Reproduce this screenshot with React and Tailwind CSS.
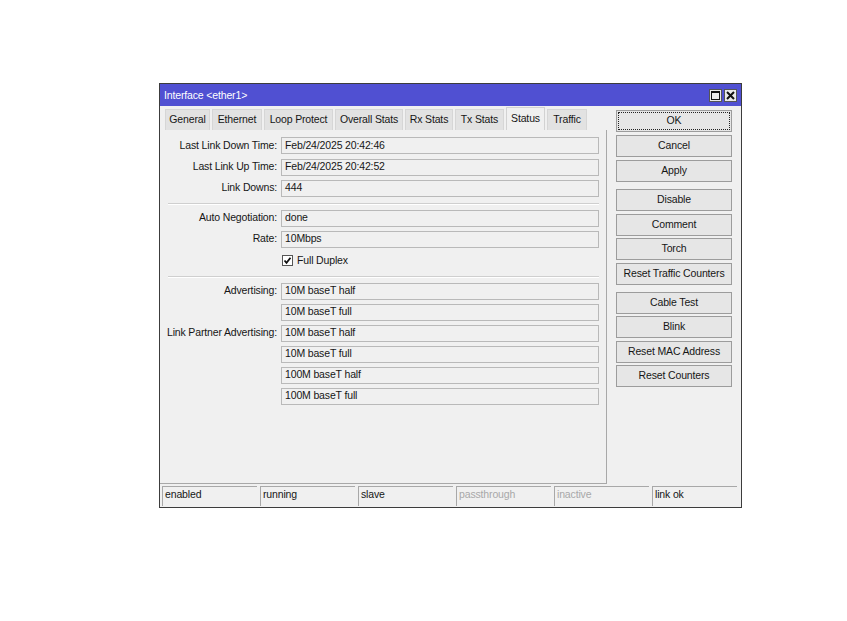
import React from "react";

const font = { fontFamily: '"Liberation Sans", Arial, sans-serif' };

function Field({ label, value }) {
  return (
    <div className="flex items-center h-[21px]">
      <div className="w-[119px] text-right pr-[2px] whitespace-nowrap">{label}</div>
      <div className="ml-[2px] w-[318px] h-[17px] border border-[#b9b9b9] bg-[#f0f0f0] flex items-center pl-[3px] whitespace-nowrap">
        {value}
      </div>
    </div>
  );
}

function Sep({ cls }) {
  return (
    <div className={`ml-[8px] w-[431px] h-[2px] border-t border-[#cfcfcf] border-b border-b-white ${cls || "my-[3px]"}`} />
  );
}

function Btn({ children, ok }) {
  return (
    <div className="w-[116px] h-[22px] border border-[#9c9c9c] bg-[#e6e6e6] flex items-center justify-center whitespace-nowrap">
      {ok ? (
        <div className="w-[112px] h-[18px] border border-dotted border-[#222] flex items-center justify-center">{children}</div>
      ) : (
        children
      )}
    </div>
  );
}

const tabs = [
  ["General", "w-[45px]"],
  ["Ethernet", "w-[50px]"],
  ["Loop Protect", "w-[69px]"],
  ["Overall Stats", "w-[68px]"],
  ["Rx Stats", "w-[48px]"],
  ["Tx Stats", "w-[49px]"],
  ["Status", "w-[39px]"],
  ["Traffic", "w-[40px]"],
];

export default function App() {
  return (
    <div className="w-[847px] h-[621px] bg-white pt-[83px] pl-[159px] text-[10.5px] tracking-[-0.15px] text-[#161616]" style={font}>
      <div className="w-[583px] h-[425px] border border-[#3c3c3c] bg-[#f0f0f0] flex flex-col">
        {/* Title bar */}
        <div className="h-[22px] bg-[#5050d2] flex items-center pl-[4px] pr-[4px] text-white">
          <span className="flex-1 pt-[2px]">Interface &lt;ether1&gt;</span>
          <div className="flex gap-[2px] pt-[1px]">
            <div className="w-[13px] h-[13px] bg-[#eaeaea] border border-[#555] flex items-center justify-center">
              <div className="w-[9px] h-[9px] border border-[#111] border-t-2" />
            </div>
            <div className="w-[13px] h-[13px] bg-[#eaeaea] border border-[#555] flex items-center justify-center">
              <svg width="9" height="9" viewBox="0 0 9 9">
                <path d="M1 1 L8 8 M8 1 L1 8" stroke="#111" strokeWidth="2" />
              </svg>
            </div>
          </div>
        </div>
        {/* Body */}
        <div className="flex flex-1">
          <div className="w-[447px] flex flex-col">
            {/* Tabs */}
            <div className="h-[24px] flex items-end pl-[5px] gap-[2px]">
              {tabs.map(([t, w]) =>
                t === "Status" ? (
                  <div key={t} className={`${w} h-[23px] bg-[#f0f0f0] border border-b-0 border-[#d2d2d2] flex justify-center items-start pt-[3px] whitespace-nowrap`}>
                    {t}
                  </div>
                ) : (
                  <div key={t} className={`${w} h-[21px] bg-[#e2e2e2] border border-b-0 border-[#d6d6d6] flex justify-center items-center whitespace-nowrap`}>
                    {t}
                  </div>
                )
              )}
            </div>
            {/* Panel */}
            <div className="h-[354px] border-r border-b border-[#a8a8a8] pt-[5px]">
              <Field label="Last Link Down Time:" value="Feb/24/2025 20:42:46" />
              <div className="mt-[0.5px]" />
              <Field label="Last Link Up Time:" value="Feb/24/2025 20:42:52" />
              <Field label="Link Downs:" value="444" />
              <Sep cls="mt-[4px] mb-[3px]" />
              <Field label="Auto Negotiation:" value="done" />
              <Field label="Rate:" value="10Mbps" />
              <div className="flex items-center h-[21px] pl-[122px] pt-[1px]">
                <div className="w-[11px] h-[11px] border border-[#555] bg-white flex items-center justify-center">
                  <svg width="9" height="9" viewBox="0 0 9 9">
                    <path d="M1.5 4.5 L3.5 6.8 L7.5 1.8" stroke="#111" strokeWidth="1.8" fill="none" />
                  </svg>
                </div>
                <span className="ml-[4px]">Full Duplex</span>
              </div>
              <Sep cls="mt-[5px] mb-[3px]" />
              <Field label="Advertising:" value="10M baseT half" />
              <Field label="" value="10M baseT full" />
              <Field label="Link Partner Advertising:" value="10M baseT half" />
              <Field label="" value="10M baseT full" />
              <Field label="" value="100M baseT half" />
              <Field label="" value="100M baseT full" />
            </div>
          </div>
          {/* Buttons */}
          <div className="ml-[9px] pt-[4px] flex flex-col">
            <div className="flex flex-col gap-[3px]">
              <Btn ok>OK</Btn>
              <Btn>Cancel</Btn>
              <Btn>Apply</Btn>
            </div>
            <div className="flex flex-col gap-[2.5px] mt-[7px]">
              <Btn>Disable</Btn>
              <Btn>Comment</Btn>
              <Btn>Torch</Btn>
              <Btn>Reset Traffic Counters</Btn>
            </div>
            <div className="flex flex-col gap-[2.5px] mt-[7px]">
              <Btn>Cable Test</Btn>
              <Btn>Blink</Btn>
              <Btn>Reset MAC Address</Btn>
              <Btn>Reset Counters</Btn>
            </div>
          </div>
        </div>
        {/* Status bar */}
        <div className="h-[22px] flex gap-[3px] pl-[2px] pt-[1px] pb-[1px]">
          {[
            ["enabled", false],
            ["running", false],
            ["slave", false],
            ["passthrough", true],
            ["inactive", true],
            ["link ok", false],
          ].map(([t, dim], i) => (
            <div
              key={t}
              className={`${i === 5 ? "w-[85px]" : "w-[95px]"} h-[20px] border-l border-t border-[#a8a8a8] flex items-center pl-[2px] pb-[3px] ${dim ? "text-[#a8a8a8]" : ""}`}
            >
              {t}
            </div>
          ))}
        </div>
      </div>
    </div>
  );
}
